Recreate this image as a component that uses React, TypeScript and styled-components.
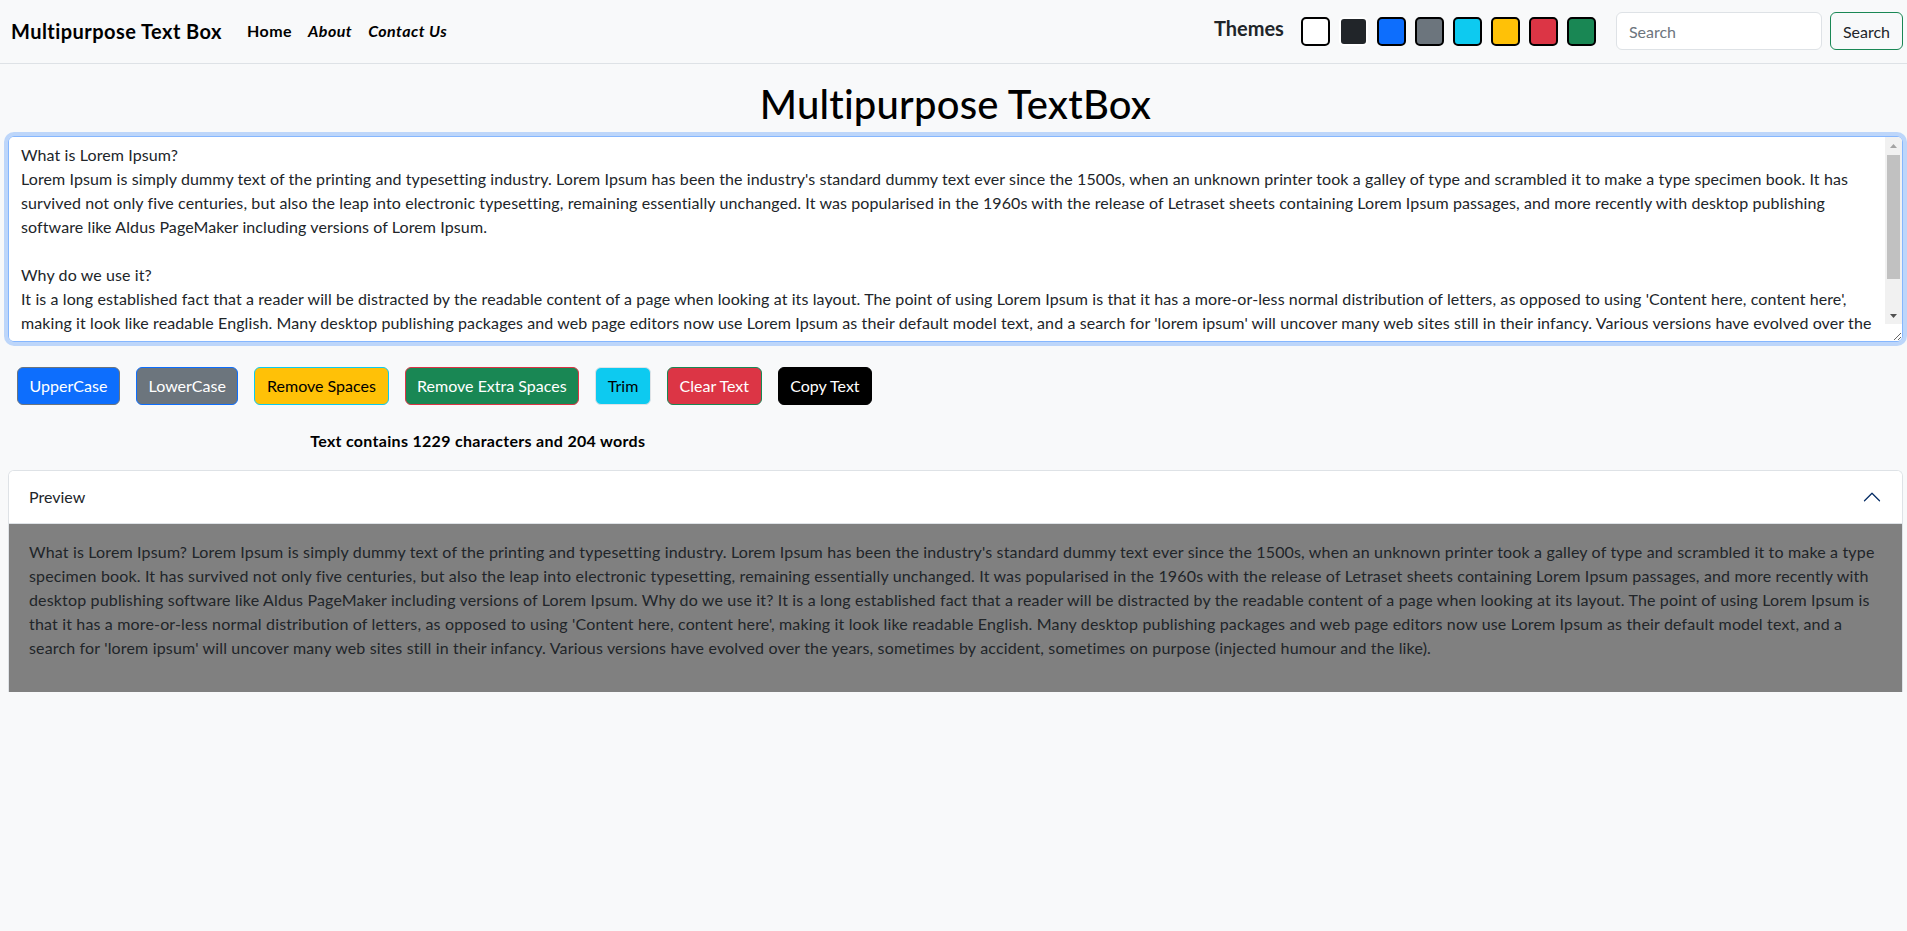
import React from 'react';
import styled, { createGlobalStyle } from 'styled-components';

const FONT = `'Lato', 'Noto Sans', sans-serif`;

const loremText = `What is Lorem Ipsum?
Lorem Ipsum is simply dummy text of the printing and typesetting industry. Lorem Ipsum has been the industry's standard dummy text ever since the 1500s, when an unknown printer took a galley of type and scrambled it to make a type specimen book. It has survived not only five centuries, but also the leap into electronic typesetting, remaining essentially unchanged. It was popularised in the 1960s with the release of Letraset sheets containing Lorem Ipsum passages, and more recently with desktop publishing software like Aldus PageMaker including versions of Lorem Ipsum.

Why do we use it?
It is a long established fact that a reader will be distracted by the readable content of a page when looking at its layout. The point of using Lorem Ipsum is that it has a more-or-less normal distribution of letters, as opposed to using 'Content here, content here', making it look like readable English. Many desktop publishing packages and web page editors now use Lorem Ipsum as their default model text, and a search for 'lorem ipsum' will uncover many web sites still in their infancy. Various versions have evolved over the years, sometimes by accident, sometimes on purpose (injected humour and the like).`;

const themes = [
	{ bg: '#ffffff', border: '#000000' },
	{ bg: '#212529', border: '#ffffff' },
	{ bg: '#0d6efd', border: '#000000' },
	{ bg: '#6c757d', border: '#000000' },
	{ bg: '#0dcaf0', border: '#000000' },
	{ bg: '#ffc107', border: '#000000' },
	{ bg: '#dc3545', border: '#000000' },
	{ bg: '#198754', border: '#000000' },
];

const actions = [
	{ label: 'UpperCase', bg: '#0d6efd', border: '#6c757d', color: '#fff' },
	{ label: 'LowerCase', bg: '#6c757d', border: '#0d6efd', color: '#fff' },
	{ label: 'Remove Spaces', bg: '#ffc107', border: '#0dcaf0', color: '#000' },
	{ label: 'Remove Extra Spaces', bg: '#198754', border: '#dc3545', color: '#fff' },
	{ label: 'Trim', bg: '#0dcaf0', border: '#dee2e6', color: '#000' },
	{ label: 'Clear Text', bg: '#dc3545', border: '#198754', color: '#fff' },
	{ label: 'Copy Text', bg: '#000000', border: '#000000', color: '#fff' },
];

const App = (): JSX.Element => {
	const preview = loremText.replace(/\s+/g, ' ');

	return (
		<>
			<GlobalStyle />
			<Navbar>
				<Brand href="#">Multipurpose Text Box</Brand>
				<NavLink href="#">Home</NavLink>
				<NavLink href="#" $italic>
					About
				</NavLink>
				<NavLink href="#" $italic>
					Contact Us
				</NavLink>
				<NavRight>
					<ThemesLabel>Themes</ThemesLabel>
					<SwatchRow>
						{themes.map((t) => (
							<Swatch key={t.bg} $bg={t.bg} $border={t.border} />
						))}
					</SwatchRow>
					<SearchForm onSubmit={(e) => e.preventDefault()}>
						<SearchInput type="search" placeholder="Search" />
						<SearchButton type="submit">Search</SearchButton>
					</SearchForm>
				</NavRight>
			</Navbar>

			<Main>
				<Title>Multipurpose TextBox</Title>
				<TextAreaWrap>
					<TextArea rows={8} defaultValue={loremText} />
					{/* the headless browser hides native scrollbars, so draw one */}
					<ScrollBar aria-hidden>
						<ScrollArrow>
							<svg width="7" height="4" viewBox="0 0 7 4">
								<path d="M0 4L3.5 0L7 4Z" fill="#a3a3a3" />
							</svg>
						</ScrollArrow>
						<ScrollThumb />
						<ScrollArrow>
							<svg width="7" height="4" viewBox="0 0 7 4">
								<path d="M0 0L3.5 4L7 0Z" fill="#505050" />
							</svg>
						</ScrollArrow>
					</ScrollBar>
				</TextAreaWrap>

				<ButtonRow>
					{actions.map((a) => (
						<ActionButton key={a.label} $bg={a.bg} $border={a.border} $color={a.color}>
							{a.label}
						</ActionButton>
					))}
				</ButtonRow>

				<WordCount>Text contains 1229 characters and 204 words</WordCount>

				<Accordion>
					<AccordionHeader>
						<span>Preview</span>
						<svg width="20" height="20" viewBox="0 0 16 16" fill="none" stroke="#052c65" strokeLinecap="round" strokeLinejoin="round">
							<path d="M2 11L8 5L14 11" />
						</svg>
					</AccordionHeader>
					<AccordionBody>
						<p>{preview}</p>
					</AccordionBody>
				</Accordion>
			</Main>
		</>
	);
};

export default App;

const GlobalStyle = createGlobalStyle`
	* {
		box-sizing: border-box;
	}
	body {
		margin: 0;
		background: #f8f9fa;
		font-family: ${FONT};
		font-size: 16px;
		line-height: 1.5;
		color: #212529;
	}
`;

const Navbar = styled.nav`
	display: flex;
	align-items: center;
	height: 64px;
	padding: 0 4px 1px 11px;
	border-bottom: 1px solid #dee2e6;
	background: #f8f9fa;
`;

const Brand = styled.a`
	font-size: 20px;
	font-weight: 700;
	letter-spacing: 0.45px;
	color: #000;
	text-decoration: none;
	margin-right: 17px;
`;

const NavLink = styled.a<{ $italic?: boolean }>`
	padding: 8px;
	font-size: 16px;
	font-weight: 700;
	letter-spacing: 0.45px;
	font-style: ${(p) => (p.$italic ? 'italic' : 'normal')};
	color: #000;
	text-decoration: none;
`;

const NavRight = styled.div`
	margin-left: auto;
	display: flex;
	align-items: center;
`;

const ThemesLabel = styled.span`
	font-size: 20px;
	font-weight: 700;
	color: #212529;
	margin-right: 17px;
	margin-top: -6px;
`;

const SwatchRow = styled.div`
	display: flex;
	gap: 9px;
	margin-right: 20px;
`;

const Swatch = styled.div<{ $bg: string; $border: string }>`
	width: 29px;
	height: 29px;
	border-radius: 5px;
	background: ${(p) => p.$bg};
	border: 2px solid ${(p) => p.$border};
`;

const SearchForm = styled.form`
	display: flex;
	align-items: center;
`;

const SearchInput = styled.input`
	width: 206px;
	height: 38px;
	padding: 6px 12px;
	font-family: ${FONT};
	font-size: 16px;
	color: #212529;
	background: #fff;
	border: 1px solid #dee2e6;
	border-radius: 6px;
	outline: none;

	&::placeholder {
		color: #6c757d;
	}
`;

const SearchButton = styled.button`
	margin-left: 8px;
	height: 38px;
	padding: 6px 12px;
	font-family: ${FONT};
	font-size: 16px;
	color: #212529;
	background: transparent;
	border: 1px solid #198754;
	border-radius: 6px;
`;

const Main = styled.main`
	padding: 16px 4px 0 8px;
`;

const Title = styled.h1`
	margin: 0 0 8px;
	text-align: center;
	font-size: 40px;
	font-weight: 500;
	letter-spacing: 0.2px;
	line-height: 1.2;
	color: #000;
`;

const TextAreaWrap = styled.div`
	position: relative;
`;

const TextArea = styled.textarea`
	display: block;
	width: 100%;
	padding: 6px 29px 6px 12px;
	font-family: ${FONT};
	font-size: 16px;
	line-height: 1.5;
	letter-spacing: 0.1px;
	color: #212529;
	background: #fff;
	border: 1px solid #86b7fe;
	border-radius: 6px;
	box-shadow: 0 0 0 4px rgba(13, 110, 253, 0.25);
	outline: none;
`;

const ScrollBar = styled.div`
	position: absolute;
	top: 1px;
	right: 1px;
	bottom: 18px;
	width: 17px;
	display: flex;
	flex-direction: column;
	background: #f1f1f1;
	border-top-right-radius: 5px;
	pointer-events: none;
`;

const ScrollArrow = styled.div`
	height: 17px;
	display: flex;
	align-items: center;
	justify-content: center;

	&:last-child {
		margin-top: auto;
	}
`;

const ScrollThumb = styled.div`
	height: 124px;
	margin: 1px 2px 0;
	background: #c1c1c1;
`;

const ButtonRow = styled.div`
	display: flex;
	margin-top: 25px;
	padding-left: 1px;
`;

const ActionButton = styled.button<{ $bg: string; $border: string; $color: string }>`
	margin: 0 8px;
	padding: 6px 11.6px;
	font-family: ${FONT};
	font-size: 16px;
	line-height: 1.5;
	color: ${(p) => p.$color};
	background: ${(p) => p.$bg};
	border: 1px solid ${(p) => p.$border};
	border-radius: 6px;
	cursor: pointer;
`;

const WordCount = styled.div`
	width: calc(50% - 8px);
	margin-top: 24px;
	text-align: center;
	font-weight: 700;
	letter-spacing: 0.3px;
	color: #000;
`;

const Accordion = styled.section`
	margin-top: 17px;
	border: 1px solid #dee2e6;
	border-bottom: 0;
	border-radius: 6px 6px 0 0;
	overflow: hidden;
	background: #fff;
`;

const AccordionHeader = styled.div`
	display: flex;
	align-items: center;
	justify-content: space-between;
	padding: 14px 20px;
	font-size: 16px;
	color: #212529;
	background: #fff;
`;

const AccordionBody = styled.div`
	padding: 16px 20px;
	background: #808080;
	border-top: 1px solid #dee2e6;
	color: #212529;
	letter-spacing: 0.16px;

	p {
		margin: 0 0 16px;
	}
`;
